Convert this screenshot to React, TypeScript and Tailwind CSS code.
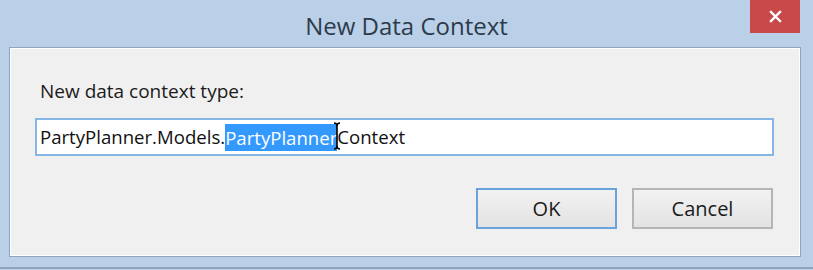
const App = () => {
  return (
    <div className="w-[813px] h-[270px] bg-[#bad0e8] flex flex-col overflow-hidden" style={{ fontFamily: '"Open Sans", "Noto Sans", sans-serif' }}>
      <div className="relative h-[47px] shrink-0 flex justify-center">
        <h1 className="mt-[10px] text-[24px] leading-[32px] text-[#2d3b4b]">New Data Context</h1>
        <button className="absolute left-[750px] top-0 w-[50px] h-[33px] bg-[#c9494b] flex items-center justify-center" type="button">
          <svg width="13" height="13" viewBox="0 0 13 13">
            <path d="M2 2 L11 11 M11 2 L2 11" stroke="#ffffff" strokeWidth="2.4" strokeLinecap="square" />
          </svg>
        </button>
      </div>
      <div className="ml-[9px] w-[792px] h-[210px] shrink-0 border border-[#8fa4bd] bg-[#f0f0f0] shadow-[inset_1px_1px_0_#ffffff,inset_-1px_-1px_0_#ffffff]">
        <div className="pl-[25px] pr-[25px] pt-[31px] flex flex-col">
          <p className="ml-[5px] text-[19px] leading-[24px] text-[#1b1b1b]">New data context type:</p>
          <div className="mt-[15px] w-[739px] h-[38px] border-2 border-[#86b6e6] bg-white flex items-center pl-[3px] text-[18.6px] text-[#111]">
            <span>PartyPlanner.Models.</span>
            <span className="bg-[#3399ff] text-white leading-[27px]">PartyPlanner</span>
            <span className="relative">
              <svg className="absolute left-[-4px] top-[-1px]" width="8" height="28" viewBox="0 0 8 28">
                <path d="M1 1 Q4 1 4 4 L4 24 Q4 27 1 27 M7 1 Q4 1 4 4 M4 24 Q4 27 7 27" stroke="#000" strokeWidth="1.6" fill="none" />
              </svg>
              Context
            </span>
          </div>
          <div className="mt-[32px] flex justify-end gap-[15px] pr-[2px]">
            <button className="w-[141px] h-[41px] border-2 border-[#6aa3dc] bg-gradient-to-b from-[#f2f2f2] to-[#e3e3e3] text-[20px] text-[#1b1b1b]" type="button">
              OK
            </button>
            <button className="w-[141px] h-[41px] border-2 border-[#b5b5b5] bg-gradient-to-b from-[#f2f2f2] to-[#e3e3e3] text-[20px] text-[#1b1b1b]" type="button">
              Cancel
            </button>
          </div>
        </div>
      </div>
      <div className="mt-[10px] h-[2px] shrink-0 bg-[#8ea3bc]"></div>
    </div>
  );
};

export default App;
